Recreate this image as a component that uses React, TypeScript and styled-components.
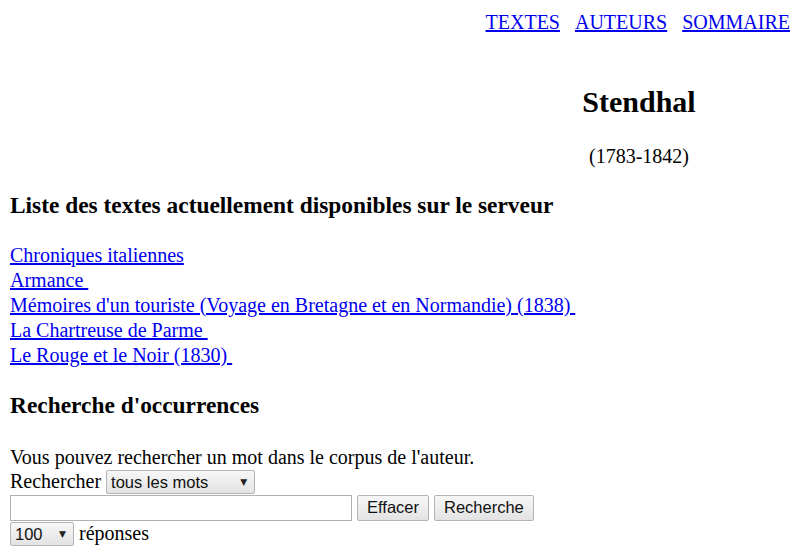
import React from "react";
import styled, { createGlobalStyle } from "styled-components";

const Global = createGlobalStyle`
  html, body { margin: 0; padding: 0; background: #fff; }
  body {
    font-family: "Liberation Serif", "Times New Roman", serif;
    font-size: 20px;
    color: #000;
  }
`;

const Page = styled.div`
  padding: 10px 10px 0 10px;
`;

const Nav = styled.nav`
  display: flex;
  justify-content: flex-end;
  gap: 15px;
  line-height: 25px;
`;

const Link = styled.a`
  color: #0000ee;
  text-decoration: underline;
`;

const Header = styled.header`
  display: flex;
  justify-content: flex-end;
  margin-right: -10px;
`;

const AuthorCol = styled.div`
  width: 322px;
  text-align: center;
`;

const AuthorName = styled.h2`
  font-size: 30px;
  font-weight: bold;
  margin: 50px 0 0 0;
  line-height: 34px;
`;

const Dates = styled.p`
  margin: 25px 0 0 0;
  line-height: 25px;
`;

const SectionTitle = styled.h3<{ $top: number }>`
  font-size: 23.4px;
  font-weight: bold;
  margin: ${(p) => p.$top}px 0 0 0;
  line-height: 27px;
`;

const TextList = styled.div`
  display: flex;
  flex-direction: column;
  align-items: flex-start;
  margin-top: 24px;
  line-height: 25px;
`;

const Intro = styled.p`
  margin: 27px 0 0 0;
  line-height: 23px;
`;

const Row = styled.div<{ $h: number }>`
  display: flex;
  align-items: center;
  gap: 5px;
  height: ${(p) => p.$h}px;
`;

const SelectWrap = styled.span`
  position: relative;
  display: inline-flex;
  &::after {
    content: "▼";
    position: absolute;
    right: 8px;
    top: 50%;
    transform: translateY(-50%);
    font-family: "DejaVu Sans", sans-serif;
    font-size: 9px;
    color: #222;
    pointer-events: none;
  }
`;

const Select = styled.select<{ $w: number }>`
  appearance: none;
  -webkit-appearance: none;
  width: ${(p) => p.$w}px;
  height: 24px;
  box-sizing: border-box;
  font-family: "Liberation Sans", Arial, sans-serif;
  font-size: 16.5px;
  border: 1px solid #b4b4b4;
  border-radius: 2px;
  background: linear-gradient(#f7f7f7, #e3e3e3);
  color: #111;
  padding: 0 4px;
  margin: 0;
`;

const TextInput = styled.input`
  width: 342px;
  height: 26px;
  box-sizing: border-box;
  border: 1px solid #b0b0b0;
  font-size: 16px;
  margin: 0;
`;

const Button = styled.button`
  height: 26px;
  box-sizing: border-box;
  font-family: "Liberation Sans", Arial, sans-serif;
  font-size: 16.5px;
  padding: 0 9px;
  margin: 0;
  border: 1px solid #b4b4b4;
  border-radius: 2px;
  background: linear-gradient(#f7f7f7, #e3e3e3);
  color: #111;
`;

const texts = [
  "Chroniques italiennes",
  "Armance\u00a0",
  "Mémoires d'un touriste (Voyage en Bretagne et en Normandie) (1838)\u00a0",
  "La Chartreuse de Parme\u00a0",
  "Le Rouge et le Noir (1830)\u00a0",
];

export default function App() {
  return (
    <Page>
      <Global />
      <Nav>
        <Link href="#">TEXTES</Link>
        <Link href="#">AUTEURS</Link>
        <Link href="#">SOMMAIRE</Link>
      </Nav>
      <Header>
        <AuthorCol>
          <AuthorName>Stendhal</AuthorName>
          <Dates>(1783-1842)</Dates>
        </AuthorCol>
      </Header>
      <SectionTitle $top={23}>Liste des textes actuellement disponibles sur le serveur</SectionTitle>
      <TextList>
        {texts.map((t) => (
          <Link key={t} href="#">{t}</Link>
        ))}
      </TextList>
      <SectionTitle $top={24}>Recherche d'occurrences</SectionTitle>
      <Intro>Vous pouvez rechercher un mot dans le corpus de l'auteur.</Intro>
      <Row $h={25}>
        Rechercher
        <SelectWrap>
          <Select $w={149} defaultValue="tous">
            <option value="tous">tous les mots</option>
            <option value="un">un des mots</option>
          </Select>
        </SelectWrap>
      </Row>
      <Row $h={27}>
        <TextInput type="text" />
        <Button>Effacer</Button>
        <Button>Recherche</Button>
      </Row>
      <Row $h={25}>
        <SelectWrap>
          <Select $w={64} defaultValue="100">
            <option value="100">100</option>
            <option value="200">200</option>
          </Select>
        </SelectWrap>
        réponses
      </Row>
    </Page>
  );
}
